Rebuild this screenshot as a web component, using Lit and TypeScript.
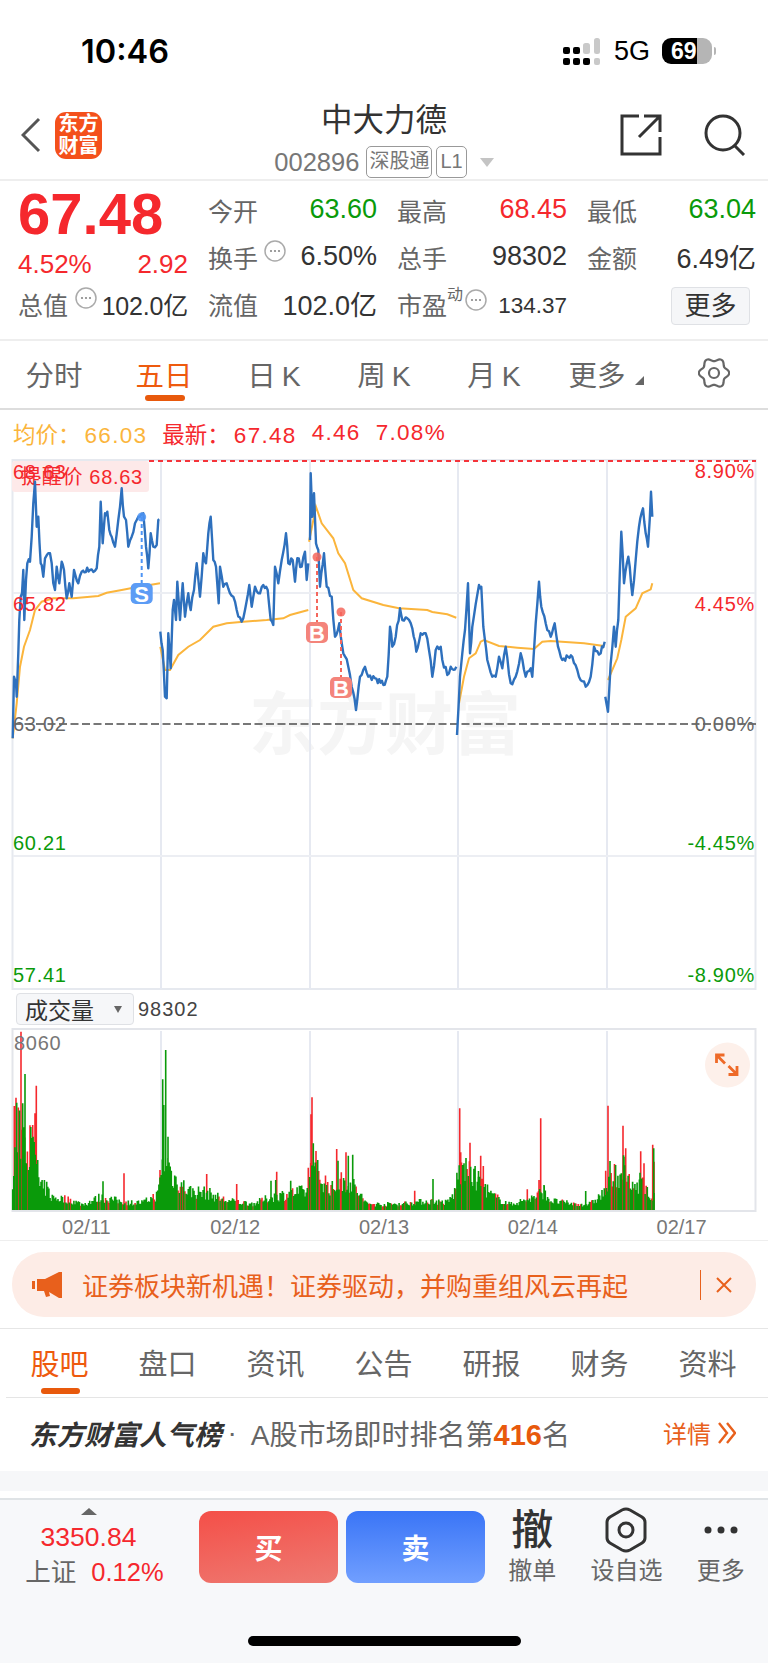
import { LitElement, html, css, svg } from "lit";
import { customElement } from "lit/decorators.js";

type Pt = [number, number];

// seeded so the picture is the same on every run
let seed = 7;
const rnd = () => {
  seed = (seed * 16807) % 2147483647;
  return seed / 2147483647;
};

// points below are read off 3x crops: page x = ox + zx / 3, page y = 420 + zy / 3
const RIGHT = 384;
const toPage = (pts: Pt[], ox = 0): Pt[] => pts.map(([x, y]) => [ox + x / 3, 420 + y / 3]);

const rough = (pts: Pt[], amp = 3.2): Pt[] => {
  const out: Pt[] = [];
  for (let i = 0; i < pts.length - 1; i++) {
    const [x0, y0] = pts[i];
    const [x1, y1] = pts[i + 1];
    const n = Math.max(1, Math.round((x1 - x0) / 1.5));
    for (let k = 0; k < n; k++) {
      const t = k / n;
      const j = k === 0 ? 0 : (rnd() - 0.5) * 2 * amp;
      out.push([x0 + (x1 - x0) * t, y0 + (y1 - y0) * t + j]);
    }
  }
  out.push(pts[pts.length - 1]);
  return out;
};

const toPath = (pts: Pt[]) =>
  pts.map(([x, y], i) => `${i ? "L" : "M"}${x.toFixed(1)} ${y.toFixed(1)}`).join("");

const priceDays: Pt[][] = [
  toPage([[38,955],[42,770],[48,790],[50,830],[55,700],[58,600],[62,530],[66,520],[70,450],[73,600],[78,480],[82,430],[90,425],[95,350],[100,250],[105,185],[110,320],[115,290],[122,430],[125,435],[130,470],[135,415],[150,400],[155,430],[160,490],[165,510],[170,440],[178,490],[185,425],[192,450],[200,535],[208,490],[215,530],[222,450],[235,490],[245,455],[270,450],[290,445],[298,380],[302,245],[308,370],[315,280],[322,275],[328,330],[335,350],[345,380],[355,300],[365,205],[372,290],[378,300],[385,380],[395,350],[405,310],[420,290],[430,280],[438,380],[445,445],[452,340],[460,380],[470,375],[475,300],[478,298]]),
  toPage([[481,635],[488,690],[495,830],[500,835],[505,640],[512,745],[518,570],[522,540],[528,600],[532,485],[540,600],[548,490],[555,590],[565,520],[572,570],[582,510],[590,430],[600,530],[610,400],[618,430],[625,340],[632,290],[640,420],[648,440],[656,550],[660,440],[670,500],[680,490],[690,520],[700,530],[710,570],[725,605],[735,570],[748,495],[755,560],[765,500],[775,520],[790,495],[803,510],[812,600],[820,615],[825,440],[835,490],[845,420],[858,340],[865,430],[878,420],[885,485],[892,415],[905,440],[915,395],[920,480],[925,430]]),
  [
    ...toPage([[930,360],[932,160],[937,290],[942,220],[948,370],[955,390],[960,500],[972,400],[980,500],[995,530],[1005,650],[1018,610],[1030,700],[1045,740],[1055,800],[1068,870],[1080,770],[1095,740],[1105,770],[1125,775],[1150,795]]),
    ...toPage([[10,770],[18,620],[25,680],[35,650],[48,565],[55,600],[70,595],[85,625],[97,695],[110,640],[125,640],[135,690],[145,770],[155,690],[170,680],[175,720],[190,765],[200,740],[217,740]], RIGHT),
  ],
  toPage([[219,945],[228,770],[235,700],[243,630],[252,490],[258,700],[265,620],[285,495],[292,500],[298,620],[310,720],[325,770],[335,770],[345,710],[355,745],[365,680],[380,790],[395,770],[410,700],[425,770],[440,745],[445,770],[455,610],[465,485],[472,560],[490,630],[500,650],[512,610],[522,680],[535,720],[565,710],[585,770],[605,800],[620,770],[630,680],[650,700],[662,665]], RIGHT),
  toPage([[664,830],[672,875],[680,730],[690,620],[695,680],[703,600],[712,335],[720,490],[733,410],[745,525],[755,420],[765,320],[777,265],[785,340],[792,380],[797,300],[801,215],[805,290]], RIGHT),
];

const avgDays: Pt[][] = [
  toPage([[38,955],[50,850],[60,740],[72,680],[90,630],[105,570],[125,545],[160,535],[220,535],[295,528],[320,518],[365,510],[400,503],[480,490]]),
  toPage([[481,680],[495,750],[510,750],[535,705],[565,680],[600,660],[640,620],[680,610],[730,605],[800,600],[850,595],[870,585],[925,570]]),
  [
    ...toPage([[927,365],[948,260],[965,310],[1000,355],[1015,400],[1035,430],[1060,510],[1085,535],[1150,555]]),
    ...toPage([[45,565],[130,570],[145,576],[190,583],[217,593]], RIGHT),
  ],
  toPage([[225,850],[240,770],[255,715],[275,700],[290,665],[300,660],[345,678],[400,683],[450,687],[475,665],[500,663],[600,670],[660,678]], RIGHT),
  toPage([[672,780],[700,715],[712,660],[725,590],[755,565],[775,520],[800,508],[805,490]], RIGHT),
];

const pricePath = priceDays.map((d) => toPath(rough(d))).join("");
const avgPath = avgDays.map((d) => toPath(d)).join("");

// volume: x in crop px measured from page 0, value is height above the baseline in crop px
const volEnvelope: Pt[] = [[38,70],[50,240],[75,240],[110,160],[118,70],[140,70],[155,40],[200,35],[250,18],[300,40],[330,35],[380,24],[430,24],[475,50],[482,120],[500,180],[515,110],[540,85],[570,60],[620,55],[680,30],[760,20],[810,40],[880,55],[925,60],[930,150],[945,120],[980,85],[1000,65],[1020,90],[1050,90],[1080,50],[1100,20],[1152,18],[1200,20],[1280,28],[1300,28],[1342,24],[1362,50],[1377,125],[1402,120],[1442,90],[1472,50],[1502,32],[1532,18],[1602,40],[1632,60],[1652,30],[1692,24],[1732,18],[1772,20],[1817,60],[1842,110],[1872,130],[1892,70],[1922,90],[1952,40],[1964,40]];

const volPeaks: [number, number, string][] = [
  [43,378,"r"],[48,353,"r"],[50,368,"g"],[63,155,"r"],[68,370,"g"],[75,282,"g"],[90,436,"r"],[98,435,"r"],[105,400,"r"],[109,317,"r"],[113,540,"g"],[372,580,"r"],[309,604,"g"],[480,570,"r"],[488,298,"g"],[491,375,"g"],[497,210,"g"],[504,470,"g"],[620,582,"r"],[710,612,"r"],[830,575,"r"],[813,602,"g"],[827,600,"g"],[872,602,"g"],[925,563,"r"],[933,403,"r"],[936,352,"r"],[940,490,"g"],[948,513,"r"],[953,540,"g"],[1010,507,"r"],[1014,542,"g"],[1038,517,"r"],[1045,527,"g"],[1058,524,"g"],
  [1379,385,"r"],[1382,517,"r"],[1392,550,"g"],[1410,488,"r"],[1412,560,"g"],[1442,527,"r"],[1450,558,"r"],[1299,597,"g"],[1435,590,"g"],[1622,415,"r"],[1617,600,"r"],[1632,615,"g"],[1824,377,"r"],[1817,572,"r"],[1830,543,"g"],[1869,437,"r"],[1872,530,"g"],[1877,505,"r"],[1922,514,"r"],[1920,578,"g"],[1932,550,"r"],[1958,494,"r"],[1961,505,"g"],[1962,545,"r"],[1244,632,"r"],[1582,628,"r"],[1757,633,"g"],
];

const envelopeAt = (x: number) => {
  for (let i = 0; i < volEnvelope.length - 1; i++) {
    const [x0, h0] = volEnvelope[i];
    const [x1, h1] = volEnvelope[i + 1];
    if (x >= x0 && x <= x1) return h0 + ((h1 - h0) * (x - x0)) / (x1 - x0);
  }
  return 0;
};

const VOL_BASE = 1210;
let volRed = "";
let volGreen = "";
for (let x = 38; x <= 1964; x += 3.4) {
  const h = (envelopeAt(x) * (0.55 + 0.75 * rnd())) / 3;
  const d = `M${(x / 3).toFixed(1)} ${VOL_BASE}V${(VOL_BASE - h).toFixed(1)}`;
  if (rnd() < 0.2) volRed += d;
  else volGreen += d;
}
const peakPath = (c: string) =>
  volPeaks
    .filter((p) => p[2] === c)
    .map(([x, top]) => `M${(x / 3).toFixed(1)} ${VOL_BASE}V${(980 + top / 3).toFixed(1)}`)
    .join("");

const gearPath = (() => {
  let d = "";
  for (let i = 0; i <= 96; i++) {
    const a = (i / 96) * Math.PI * 2;
    const r = 13.5 - 1.7 * Math.cos(a * 6);
    d += `${i ? "L" : "M"}${(16 + r * Math.sin(a)).toFixed(2)} ${(16 - r * Math.cos(a)).toFixed(2)}`;
  }
  return d + "Z";
})();

const dotsIcon = html`<svg class="dots-ico" width="22" height="22" viewBox="0 0 22 22">
  <circle cx="11" cy="11" r="10" fill="none" stroke="#aaa" stroke-width="1.5"></circle>
  <circle cx="7" cy="11" r="1.1" fill="#888"></circle>
  <circle cx="11" cy="11" r="1.1" fill="#888"></circle>
  <circle cx="15" cy="11" r="1.1" fill="#888"></circle>
</svg>`;

@customElement("five-day-chart")
class FiveDayChart extends LitElement {
  static styles = css`
    :host { display: block; height: 531px; }
    svg { display: block; }
    text { font-family: "Liberation Sans", "Noto Sans CJK SC", sans-serif; font-size: 20px; letter-spacing: 0.7px; }
    .up { fill: #f5282d; }
    .flat { fill: #666; }
    .down { fill: #0a9a0a; }
    .end { text-anchor: end; }
    .mark { font-weight: 700; font-size: 22px; fill: #fff; text-anchor: middle; letter-spacing: 0; }
    .mark-s { fill: #5c9cf5; }
    .mark-b { fill: #f4847b; }
    .watermark { font-size: 68px; font-weight: 700; fill: #f5f5f5; letter-spacing: 0; }
  `;

  marker(kind: "S" | "B", x: number, dotY: number, boxY: number) {
    const color = kind === "S" ? "#4d94f5" : "#f4665c";
    return svg`
      <path d="M${x} ${dotY}V${boxY}" stroke=${color} stroke-width="2" stroke-dasharray="4 3" fill="none"></path>
      <circle cx=${x} cy=${dotY} r="4.5" fill=${color} opacity="0.85"></circle>
      <rect class=${kind === "S" ? "mark-s" : "mark-b"} x=${x - 11} y=${boxY} width="22" height="21" rx="5"></rect>
      <text class="mark" x=${x} y=${boxY + 18.5}>${kind}</text>`;
  }

  render() {
    const gridX = [161, 310, 458, 607];
    return html`<svg width="768" height="531" viewBox="0 459 768 531">
      <text class="watermark" x="249" y="749">东方财富</text>
      <rect x="12.5" y="460" width="743" height="529" fill="none" stroke="#e6e9ef" stroke-width="2"></rect>
      ${gridX.map((x) => svg`<path d="M${x} 460V989" stroke="#e6e9f1" stroke-width="2"></path>`)}
      <path d="M13 593H755M13 856H755" stroke="#eceef3" stroke-width="2"></path>
      <path d="M149 461H756" stroke="#f5343a" stroke-width="2" stroke-dasharray="5 4"></path>
      <path d="M13 724H756" stroke="#777" stroke-width="2" stroke-dasharray="8 3.5"></path>
      <rect x="12" y="461" width="137" height="31" rx="3" fill="#fde9e9"></rect>
      <text class="up" x="13" y="479">68.63</text>
      <text class="up" x="21" y="484">提醒价 68.63</text>
      <path d=${avgPath} fill="none" stroke="#fbb53c" stroke-width="2"></path>
      <path d=${pricePath} fill="none" stroke="#2e70bd" stroke-width="2.4" stroke-linejoin="round"></path>
      ${this.marker("S", 141.7, 517, 583)}
      ${this.marker("B", 317, 557, 622)}
      ${this.marker("B", 341, 612, 677)}
      <text class="up" x="13" y="611">65.82</text>
      <text class="flat" x="13" y="731">63.02</text>
      <text class="down" x="13" y="850">60.21</text>
      <text class="down" x="13" y="982">57.41</text>
      <text class="up end" x="755" y="478">8.90%</text>
      <text class="up end" x="755" y="611">4.45%</text>
      <text class="flat end" x="755" y="731">0.00%</text>
      <text class="down end" x="755" y="850">-4.45%</text>
      <text class="down end" x="755" y="982">-8.90%</text>
    </svg>`;
  }
}

@customElement("volume-chart")
class VolumeChart extends LitElement {
  static styles = css`
    :host { display: block; height: 184px; }
    svg { display: block; }
    text { font-family: "Liberation Sans", sans-serif; font-size: 20px; letter-spacing: 0.7px; fill: #777; }
  `;

  render() {
    const gridX = [161, 310, 458, 607];
    return html`<svg width="768" height="184" viewBox="0 1028 768 184">
      <rect x="12.5" y="1029" width="743" height="182" fill="none" stroke="#e3e5ea" stroke-width="2"></rect>
      ${gridX.map((x) => svg`<path d="M${x} 1031V1210" stroke="#e6e9f1" stroke-width="2"></path>`)}
      <path d=${volRed + peakPath("r")} stroke="#f5282d" stroke-width="1.6" fill="none"></path>
      <path d=${volGreen + peakPath("g")} stroke="#0a9a0a" stroke-width="1.6" fill="none"></path>
      <text x="14" y="1050">8060</text>
      <circle cx="727.5" cy="1065" r="22.5" fill="#fdf0ea"></circle>
      <path d="M716.5 1063v-8h8M717 1055.5l8 8M737 1066v8.5h-8.5M736.5 1074l-8-8" stroke="#ee6a28" stroke-width="2.8" fill="none"></path>
    </svg>`;
  }
}

@customElement("app-root")
export class AppRoot extends LitElement {
  static styles = css`
    :host {
      display: block;
      width: 768px;
      height: 1663px;
      background: #fff;
      overflow: hidden;
      font-family: "Liberation Sans", "Noto Sans CJK SC", sans-serif;
      color: #333;
    }
    * { box-sizing: border-box; }
    svg { display: block; flex: none; }

    .status { height: 100px; display: flex; align-items: flex-start; padding-top: 34px; }
    .clock { margin-left: 81px; width: 482px; font-family: Inter, sans-serif; font-weight: 600; font-size: 32.5px; line-height: 36px; color: #000; }
    .signal { margin-top: 4px; }
    .five-g { margin-left: 13px; width: 48px; font-size: 27px; line-height: 34px; color: #000; }
    .battery { margin-top: 4px; width: 50px; height: 26px; border-radius: 9px; background: linear-gradient(90deg, #000 0 70%, #b5b5b5 70% 100%); color: #fff; font-weight: 700; font-size: 23px; line-height: 26px; padding-left: 9px; }
    .nub { margin: 13px 0 0 2px; width: 2px; height: 8px; border-radius: 0 2px 2px 0; background: #b5b5b5; }

    .nav { height: 81px; border-bottom: 2px solid #eee; display: grid; grid-template-columns: 1fr auto 1fr; }
    .nav-left { display: flex; align-items: center; height: 70px; padding: 0 0 0 21px; gap: 14px; }
    .logo { width: 47px; height: 47px; border-radius: 11px; background: #f4501b; color: #fff; font-weight: 700; font-size: 20px; line-height: 22px; text-align: center; padding-top: 1px; }
    .nav-mid { display: flex; flex-direction: column; align-items: center; }
    .title { font-size: 31.5px; line-height: 36px; padding-top: 2px; height: 38px; color: #333; }
    .sub { display: flex; align-items: center; height: 32px; margin-top: 8px; gap: 7px; color: #777; font-size: 25.5px; }
    .tag { border: 1px solid #999; border-radius: 5px; font-size: 20px; line-height: 29px; height: 32px; padding: 0 2px; }
    .tag + .tag { margin-left: -3px; padding: 0 3px; }
    .tri { width: 0; height: 0; border: 7px solid transparent; border-top: 9px solid #c4c4c4; border-bottom: 0; margin-left: 6px; }
    .nav-right { display: flex; justify-content: flex-end; align-items: center; height: 70px; gap: 42px; padding-right: 22px; }

    .quote { height: 160px; border-bottom: 2px solid #eee; padding: 5px 13px 0 18px; display: flex; }
    .q-left { width: 170px; margin-right: 20px; flex: none; }
    .price { height: 56px; font-size: 58px; font-weight: 700; color: #f5282d; line-height: 56px; letter-spacing: 0; white-space: nowrap; }
    .change { height: 44px; display: flex; justify-content: space-between; align-items: center; font-size: 26px; color: #f5282d; }
    .q-total { height: 36px; display: flex; align-items: center; font-size: 25px; color: #666; white-space: nowrap; }
    .q-total .dots-ico { margin: -12px 0 0 7px; }
    .q-total b { margin-left: auto; font-weight: 400; color: #333; font-size: 25px; letter-spacing: -0.2px; }
    .q-grid { flex: 1; display: grid; grid-template-columns: 169px 170px 169px; grid-auto-rows: 47px; column-gap: 20px; }
    .cell { display: flex; align-items: center; font-size: 25px; color: #666; white-space: nowrap; }
    .cell .dots-ico { margin: -12px 0 0 6px; }
    .cell .val { margin-left: auto; font-size: 27px; color: #333; }
    .val.up { color: #f5282d; }
    .val.down { color: #0a9a0a; }
    .cell .val.small { font-size: 22.5px; margin-top: 4px; }
    .cell sup { font-size: 16px; line-height: 16px; margin: -18px 2px 0 0; }
    .cell sup + .dots-ico { margin-left: 0; margin-top: -8px; }
    .more-btn { margin-left: auto; margin-right: 6px; margin-top: 4px; width: 79px; height: 38px; background: #f5f6f8; border: 1px solid #dfe1e5; border-radius: 4px; color: #333; font-size: 26px; line-height: 36px; text-align: center; }

    .periods { height: 69px; border-bottom: 2px solid #ddd; display: grid; grid-template-columns: repeat(7, 110px); }
    .period { position: relative; display: flex; align-items: center; justify-content: center; height: 68px; font-size: 28.5px; color: #666; padding: 0 2px 4px 0; word-spacing: -2px; white-space: nowrap; }
    .period.on { color: #ee5a0e; }
    .period.on::after { content: ""; position: absolute; left: 35px; bottom: 8px; width: 40px; height: 6px; border-radius: 3px; background: #e8590c; }
    .period.wide { padding-left: 4px; }
    .corner { width: 0; height: 0; border-left: 9px solid transparent; border-bottom: 9px solid #666; margin: 14px 0 0 9px; }

    .legend { height: 49px; display: flex; align-items: center; padding: 0 0 3px 13px; gap: 15px; font-size: 22.5px; color: #f5282d; letter-spacing: 1.3px; }
    .legend .avg { color: #fbb53c; }
    .legend span { white-space: nowrap; }
    .legend i { font-style: normal; letter-spacing: 0; margin-right: 4px; }

    .vol-head { height: 38px; padding: 3px 0 0 16px; display: flex; gap: 4px; align-items: flex-start; }
    .picker { width: 118px; height: 32px; background: #f6f7f9; border: 1px solid #dfe1e5; border-radius: 4px; display: flex; align-items: center; padding-left: 8px; font-size: 23px; color: #333; }
    .picker em { margin-left: auto; margin-right: 11px; width: 0; height: 0; border: 4.5px solid transparent; border-top: 7px solid #666; border-bottom: 0; }
    .vol-val { font-size: 20px; line-height: 32px; letter-spacing: 1px; color: #444; }

    .dates { height: 29px; border-bottom: 1px solid #eee; padding-left: 12px; display: grid; grid-template-columns: repeat(5, 148.8px); font-size: 20px; line-height: 30px; text-align: center; color: #777; }

    .notice-wrap { height: 88px; border-bottom: 1px solid #e6e6e6; padding: 11px 12px 0; }
    .notice { height: 65px; border-radius: 32px; background: #fdece6; display: flex; align-items: center; padding-left: 20px; color: #e8601c; font-size: 26px; white-space: nowrap; }
    .notice span { margin-left: 20px; width: 618px; }
    .notice s { width: 1px; height: 30px; background: #e8601c; }
    .notice svg:last-child { margin-left: 15px; }

    .tabs { height: 69px; margin-left: 6px; border-bottom: 1px solid #e5e5e5; display: grid; grid-template-columns: repeat(7, 108px); }
    .tab { position: relative; display: flex; align-items: center; justify-content: center; height: 68px; font-size: 29px; color: #666; padding: 0 1px 2px 0; }
    .tab.on { color: #ee5a0e; }
    .tab.on::after { content: ""; position: absolute; left: 35px; bottom: 3px; width: 39px; height: 6px; border-radius: 3px; background: #e8590c; }

    .rank { height: 73px; display: flex; align-items: center; padding: 0 32px 4px 29px; font-size: 28px; color: #666; white-space: nowrap; }
    .rank .brand { font-size: 27.5px; font-weight: 700; font-style: italic; color: #333; }
    .rank .sep { margin: 0 14px 0 6px; }
    .rank b { color: #e8590c; font-size: 29px; }
    .rank .more { margin-left: auto; font-size: 24px; color: #e8601c; display: flex; align-items: center; gap: 7px; }

    .strip { height: 20px; background: #f6f7f9; }
    .gap { height: 7px; }

    .bar { height: 165px; border-top: 2px solid #dfe3e6; background: #f7f8fa; display: flex; flex-wrap: wrap; align-content: flex-start; position: relative; }
    .index { width: 199px; display: flex; flex-direction: column; align-items: center; }
    .index .arrow { margin: 8px 0 0 -22px; width: 0; height: 0; border: 8px solid transparent; border-bottom: 7px solid #666; border-top: 0; }
    .index .num { margin: 7px 0 0 -22px; font-size: 26.5px; line-height: 30px; color: #f5282d; }
    .index .pct { margin-top: 4px; margin-left: -10px; display: flex; gap: 15px; font-size: 25.5px; line-height: 32px; color: #666; }
    .index .pct span { color: #f5282d; }
    .trade { margin-top: 11px; width: 139px; height: 72px; border-radius: 12px; color: #fff; font-size: 28px; font-weight: 700; display: flex; align-items: center; justify-content: center; }
    .buy { background: linear-gradient(170deg, #f44f48, #ee7a72); margin-right: 8px; }
    .sell { background: linear-gradient(180deg, #3a75f6, #719fff); }
    .act { width: 94.3px; display: flex; flex-direction: column; align-items: center; font-size: 24px; color: #666; }
    .act .glyph { height: 55px; font-size: 42px; line-height: 62px; font-weight: 500; color: #333; }
    .act .ico { height: 55px; display: flex; align-items: center; padding-top: 5px; }
    .act label { line-height: 32px; }
    .home { width: 100%; }
    .home i { position: absolute; left: 248px; top: 136px; width: 273px; height: 10px; border-radius: 5px; background: #000; }
  `;

  render() {
    return html`
      <div class="status">
        <div class="clock">10:46</div>
        <svg class="signal" width="38" height="27" viewBox="0 0 38 27">
          <rect x="0" y="9" width="7" height="7" rx="2"></rect>
          <rect x="0" y="20" width="7" height="7" rx="2"></rect>
          <rect x="10" y="9" width="7" height="7" rx="2"></rect>
          <rect x="10" y="20" width="7" height="7" rx="2"></rect>
          <rect x="20" y="5" width="7" height="11" rx="2.5" fill="#c9c9c9"></rect>
          <rect x="20" y="20" width="7" height="7" rx="2"></rect>
          <rect x="31" y="0" width="6" height="16" rx="2.5" fill="#c9c9c9"></rect>
          <rect x="31" y="20" width="6" height="7" rx="2" fill="#c9c9c9"></rect>
        </svg>
        <div class="five-g">5G</div>
        <div class="battery">69</div>
        <div class="nub"></div>
      </div>

      <div class="nav">
        <div class="nav-left">
          <svg width="20" height="36" viewBox="0 0 20 36"><path d="M18 2L2 18l16 16" fill="none" stroke="#555" stroke-width="3"></path></svg>
          <div class="logo">东方<br />财富</div>
        </div>
        <div class="nav-mid">
          <div class="title">中大力德</div>
          <div class="sub">
            <span>002896</span>
            <span class="tag">深股通</span>
            <span class="tag">L1</span>
            <span class="tri"></span>
          </div>
        </div>
        <div class="nav-right">
          <svg width="42" height="42" viewBox="0 0 42 42" fill="none" stroke="#333" stroke-width="3">
            <path d="M19 2H2v38h38V23M19 23L40 2M24 2h16v16"></path>
          </svg>
          <svg width="42" height="42" viewBox="0 0 42 42" fill="none" stroke="#333" stroke-width="3">
            <circle cx="19" cy="19" r="17"></circle>
            <path d="M31 32l9 9"></path>
          </svg>
        </div>
      </div>

      <div class="quote">
        <div class="q-left">
          <div class="price">67.48</div>
          <div class="change"><span>4.52%</span><span>2.92</span></div>
          <div class="q-total">总值${dotsIcon}<b>102.0亿</b></div>
        </div>
        <div class="q-grid">
          <div class="cell">今开<span class="val down">63.60</span></div>
          <div class="cell">最高<span class="val up">68.45</span></div>
          <div class="cell">最低<span class="val down">63.04</span></div>
          <div class="cell">换手${dotsIcon}<span class="val">6.50%</span></div>
          <div class="cell">总手<span class="val">98302</span></div>
          <div class="cell">金额<span class="val">6.49亿</span></div>
          <div class="cell">流值<span class="val">102.0亿</span></div>
          <div class="cell">市盈<sup>动</sup>${dotsIcon}<span class="val small">134.37</span></div>
          <div class="cell"><div class="more-btn">更多</div></div>
        </div>
      </div>

      <div class="periods">
        <div class="period">分时</div>
        <div class="period on">五日</div>
        <div class="period">日 K</div>
        <div class="period">周 K</div>
        <div class="period">月 K</div>
        <div class="period wide">更多<span class="corner"></span></div>
        <div class="period">
          <svg width="32" height="32" viewBox="0 0 32 32" fill="none" stroke="#666" stroke-width="2.2">
            <path d=${gearPath}></path>
            <circle cx="16" cy="16" r="5"></circle>
          </svg>
        </div>
      </div>

      <div class="legend">
        <span class="avg"><i>均价：</i>66.03</span>
        <span><i>最新：</i>67.48</span>
        <span>4.46</span>
        <span>7.08%</span>
      </div>

      <five-day-chart></five-day-chart>

      <div class="vol-head">
        <div class="picker">成交量<em></em></div>
        <div class="vol-val">98302</div>
      </div>
      <volume-chart></volume-chart>

      <div class="dates">
        <span>02/11</span><span>02/12</span><span>02/13</span><span>02/14</span><span>02/17</span>
      </div>

      <div class="notice-wrap">
        <div class="notice">
          <svg width="30" height="26" viewBox="0 0 30 26" fill="#e8601c">
            <path d="M0 9h3v8H0zM5 7h8L27 0h3v26h-3L17 20l1 4-4 1-2-6H5z"></path>
          </svg>
          <span>证券板块新机遇！证券驱动，并购重组风云再起</span>
          <s></s>
          <svg width="16" height="16" viewBox="0 0 16 16" stroke="#e8601c" stroke-width="2"><path d="M1 1l14 14M15 1L1 15"></path></svg>
        </div>
      </div>

      <div class="tabs">
        <div class="tab on">股吧</div>
        <div class="tab">盘口</div>
        <div class="tab">资讯</div>
        <div class="tab">公告</div>
        <div class="tab">研报</div>
        <div class="tab">财务</div>
        <div class="tab">资料</div>
      </div>

      <div class="rank">
        <span class="brand">东方财富人气榜</span>
        <span class="sep">·</span>
        <span>A股市场即时排名第<b>416</b>名</span>
        <span class="more">详情
          <svg width="18" height="22" viewBox="0 0 18 22" fill="none" stroke="#e8601c" stroke-width="2.4"><path d="M1 1l8 10-8 10M9 1l8 10-8 10"></path></svg>
        </span>
      </div>

      <div class="strip"></div>
      <div class="gap"></div>

      <div class="bar">
        <div class="index">
          <div class="arrow"></div>
          <div class="num">3350.84</div>
          <div class="pct">上证<span>0.12%</span></div>
        </div>
        <div class="trade buy">买</div>
        <div class="trade sell">卖</div>
        <div class="act"><div class="glyph">撤</div><label>撤单</label></div>
        <div class="act">
          <div class="ico">
            <svg width="42" height="46" viewBox="0 0 42 46" fill="none" stroke="#333" stroke-width="3">
              <path d="M17 3q4-2 8 0l12 7q3 2 3 5v16q0 3-3 5l-12 7q-4 2-8 0L5 36q-3-2-3-5V15q0-3 3-5z"></path>
              <circle cx="21" cy="23" r="7"></circle>
            </svg>
          </div>
          <label>设自选</label>
        </div>
        <div class="act">
          <div class="ico">
            <svg width="34" height="8" viewBox="0 0 34 8" fill="#333">
              <circle cx="4" cy="4" r="3.5"></circle><circle cx="17" cy="4" r="3.5"></circle><circle cx="30" cy="4" r="3.5"></circle>
            </svg>
          </div>
          <label>更多</label>
        </div>
        <div class="home"><i></i></div>
      </div>
    `;
  }
}
